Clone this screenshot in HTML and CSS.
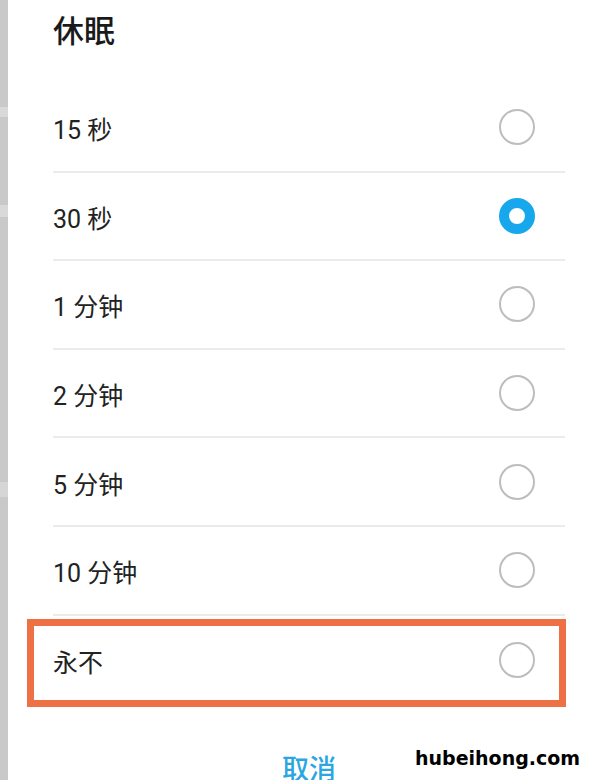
FILE: index.html
```html
<!DOCTYPE html>
<html lang="zh-CN">
<head>
    <meta charset="UTF-8">
    <meta name="viewport" content="width=device-width, initial-scale=1.0">
    <title>休眠</title>
    <link rel="stylesheet" href="styles.css">
</head>
<body>
    <div class="edge"></div>
    <div class="dialog">
        <div class="title">休眠</div>

        <div class="option">
            <span class="label">15 秒</span>
            <span class="radio"></span>
        </div>
        <div class="option">
            <span class="label">30 秒</span>
            <span class="radio checked"></span>
        </div>
        <div class="option">
            <span class="label">1 分钟</span>
            <span class="radio"></span>
        </div>
        <div class="option">
            <span class="label">2 分钟</span>
            <span class="radio"></span>
        </div>
        <div class="option">
            <span class="label">5 分钟</span>
            <span class="radio"></span>
        </div>
        <div class="option">
            <span class="label">10 分钟</span>
            <span class="radio"></span>
        </div>
        <div class="option last">
            <span class="label">永不</span>
            <span class="radio"></span>
            <!-- annotation box drawn over the row -->
            <div class="highlight"></div>
        </div>

        <div class="actions">
            <span class="cancel">取消</span>
        </div>
    </div>
    <div class="watermark">hubeihong.com</div>
</body>
</html>
```

FILE: styles.css
```css
html, body {
    margin: 0;
    height: 780px;
    overflow: hidden;
}
body {
    display: flex;
    background: #fff;
    font-family: Roboto, "Noto Sans CJK SC", sans-serif;
    color: #222;
    position: relative;
}
.edge {
    width: 8px;
    flex: none;
    background: linear-gradient(to bottom,
        #c9c9c9 0, #c9c9c9 107px, #d9d9d9 107px, #d9d9d9 117px,
        #c9c9c9 117px, #c9c9c9 205px, #d9d9d9 205px, #d9d9d9 217px,
        #c9c9c9 217px, #c9c9c9 482px, #d6d6d6 482px, #d6d6d6 497px,
        #c9c9c9 497px);
}
.dialog {
    flex: 1;
    padding: 0 39px 0 45px;
}
.title {
    height: 84px;
    line-height: 58px;
    font-size: 31px;
    font-weight: 500;
    font-family: "Noto Sans CJK SC", sans-serif;
    color: #1a1a1a;
}
.option {
    height: 88.6px;
    box-sizing: border-box;
    display: flex;
    align-items: center;
    justify-content: space-between;
    padding-right: 30px;
    border-bottom: 2px solid #ebebeb;
    position: relative;
}
.option.last {
    border-bottom: none;
    height: 88px;
}
.label {
    font-size: 25px;
    padding-top: 2px;
}
.radio {
    width: 36px;
    height: 36px;
    box-sizing: border-box;
    border-radius: 50%;
    border: 2px solid #bdbdbd;
}
.radio.checked {
    border: 10.5px solid #16a7ec;
}
.highlight {
    position: absolute;
    top: 3px;
    bottom: -3px;
    left: -26px;
    right: -1px;
    border: 7px solid #ee7146;
}
.actions {
    padding-top: 44px;
    text-align: center;
}
.cancel {
    font-size: 27px;
    line-height: 40px;
    color: #2ba6e0;
    font-family: "Noto Sans CJK SC", sans-serif;
    font-weight: 500;
}
.watermark {
    position: absolute;
    left: 415px;
    top: 749px;
    font-family: "DejaVu Sans", sans-serif;
    font-weight: bold;
    font-size: 19px;
    line-height: 19px;
    color: #000;
}
```
